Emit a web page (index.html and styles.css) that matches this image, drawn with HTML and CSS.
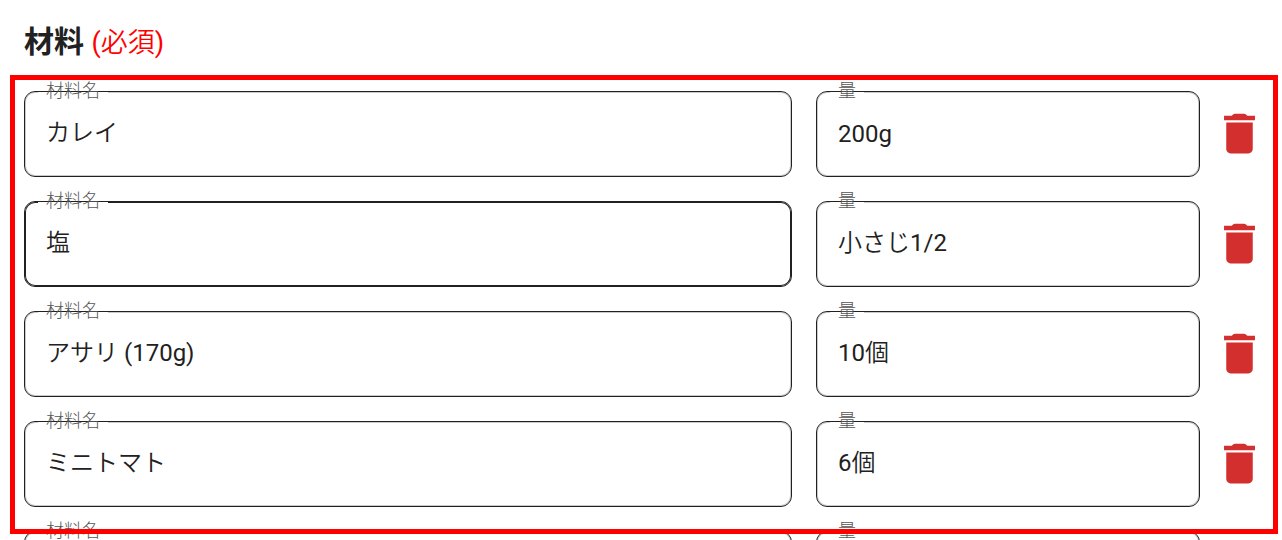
FILE: index.html
```html
<!DOCTYPE html>
<html lang="ja">
<head>
<meta charset="utf-8">
<meta name="viewport" content="width=device-width, initial-scale=1">
<title>材料</title>
<link rel="stylesheet" href="styles.css">
</head>
<body>
<svg class="sprite" aria-hidden="true">
  <symbol id="trash" viewBox="0 0 24 24"><path d="M6 19c0 1.100.9 2 2 2h8c1.100 0 2-.9 2-2V7H6v12zM19 4h-3.500l-.71-.71c-.18-.18-.44-.29-.7-.29H9.910c-.26 0-.52.11-.7.29L8.500 4H5v2h14V4z"/></symbol>
</svg>
<main class="page">
  <h1 class="heading">材料 <span class="required">(必須)</span></h1>
  <form class="rows">
    <div class="row">
      <div class="field"><label class="label" for="n1">材料名</label><input class="input input-ja" id="n1" value="カレイ"></div>
      <div class="field"><label class="label" for="q1">量</label><input class="input" id="q1" value="200g"></div>
      <button class="delete" type="button" aria-label="削除"><svg class="icon"><use href="#trash"/></svg></button>
    </div>
    <div class="row">
      <div class="field field-active"><label class="label" for="n2">材料名</label><input class="input input-ja" id="n2" value="塩"></div>
      <div class="field"><label class="label" for="q2">量</label><input class="input input-ja" id="q2" value="小さじ1/2"></div>
      <button class="delete" type="button" aria-label="削除"><svg class="icon"><use href="#trash"/></svg></button>
    </div>
    <div class="row">
      <div class="field"><label class="label" for="n3">材料名</label><input class="input input-ja" id="n3" value="アサリ (170g)"></div>
      <div class="field"><label class="label" for="q3">量</label><input class="input input-ja" id="q3" value="10個"></div>
      <button class="delete" type="button" aria-label="削除"><svg class="icon"><use href="#trash"/></svg></button>
    </div>
    <div class="row">
      <div class="field"><label class="label" for="n4">材料名</label><input class="input input-ja" id="n4" value="ミニトマト"></div>
      <div class="field"><label class="label" for="q4">量</label><input class="input input-ja" id="q4" value="6個"></div>
      <button class="delete" type="button" aria-label="削除"><svg class="icon"><use href="#trash"/></svg></button>
    </div>
    <div class="row">
      <div class="field"><label class="label" for="n5">材料名</label><input class="input" id="n5"></div>
      <div class="field"><label class="label" for="q5">量</label><input class="input" id="q5"></div>
      <button class="delete" type="button" aria-label="削除"><svg class="icon"><use href="#trash"/></svg></button>
    </div>
  </form>
  <div class="highlight"></div>
</main>
</body>
</html>
```
FILE: styles.css
```css
* { box-sizing: border-box; }

body {
  margin: 0;
  background: #fff;
  color: #212121;
  font-family: Roboto, "Noto Sans CJK JP", sans-serif;
}

.sprite { display: none; }

.page {
  position: relative;
  height: 100vh;
  overflow: hidden;
  padding: 20px 16px 0 24px;
}

.heading {
  margin: 0;
  height: 71px;
  font-size: 30px;
  line-height: 44px;
  font-weight: 700;
}

.required {
  color: #f00;
  font-family: Roboto, "Noto Sans CJK JP DemiLight", "Noto Sans CJK JP", sans-serif;
  font-size: 27px;
  font-weight: 400;
}

.rows {
  display: grid;
  gap: 24px;
}

.row {
  display: grid;
  grid-template-columns: 2fr 1fr 42px;
  column-gap: 24px;
  align-items: center;
}

.field { position: relative; }

.label {
  position: absolute;
  z-index: 1;
  top: -14px;
  left: 22px;
  color: #555;
  font-size: 18px;
  line-height: 27px;
  font-weight: 300;
}

/* Thins the outline to a hairline behind the floating label. */
.label::before {
  content: "";
  position: absolute;
  z-index: -1;
  top: 15px;
  left: -8px;
  right: -8px;
  height: 1px;
  background: #fff;
}

.input {
  display: block;
  width: 100%;
  height: 86px;
  padding: 0 21px;
  border: 1px solid #212121;
  border-radius: 11px;
  outline: 0;
  background: transparent;
  box-shadow: inset 0 0 0 1px #2121213d;
  color: #212121;
  font: 400 24px/30px Roboto, "Noto Sans CJK JP DemiLight", "Noto Sans CJK JP", sans-serif;
}

.input-ja { padding-bottom: 8px; }

.field-active .input { box-shadow: inset 0 0 0 1px #212121; }

.delete {
  margin-left: -11px;
  width: 53px;
  padding: 0 0 2px;
  border: 0;
  background: none;
  color: #d32f2f;
  cursor: pointer;
}

.icon {
  display: block;
  width: 53px;
  height: 53px;
  fill: currentColor;
}

/* Callout frame laid over the form. */
.highlight {
  position: absolute;
  z-index: 2;
  top: 75px;
  right: 4px;
  bottom: 6px;
  left: 10px;
  border: 5px solid #f00;
  pointer-events: none;
}
```
